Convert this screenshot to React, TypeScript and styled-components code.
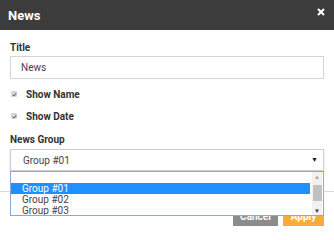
import React from 'react';
import styled, { createGlobalStyle } from 'styled-components';

const GlobalStyle = createGlobalStyle`
  html, body { margin: 0; padding: 0; background: #fff; }
  body { font-family: Roboto, "Liberation Sans", Arial, sans-serif; }
`;

const Dialog = styled.div`
  width: 334px;
  height: 235px;
  background: #fff;
  overflow: hidden;
  position: relative;
`;

const Header = styled.div`
  height: 30px;
  background: #3c3c3c;
  display: flex;
  align-items: center;
  justify-content: space-between;
  padding: 0 9px 0 8px;
  box-sizing: border-box;
`;

const HeaderTitle = styled.span`
  color: #fff;
  font-size: 13px;
  font-weight: 700;
  margin-top: 1px;
`;

const CloseButton = styled.span`
  display: flex;
  margin-top: -6px;
`;

const Body = styled.div`
  padding: 12px 10px 0 10px;
`;

const Label = styled.div<{ $mt?: number }>`
  font-size: 10px;
  line-height: 12px;
  font-weight: 700;
  color: #333;
  margin-top: ${p => p.$mt ?? 0}px;
`;

const TextInput = styled.div`
  margin-top: 2px;
  height: 23px;
  box-sizing: border-box;
  border: 1px solid #d4d4d4;
  display: flex;
  align-items: center;
  padding-left: 10px;
  font-size: 10px;
  color: #4d3a52;
`;

const CheckRow = styled.div<{ $mt: number }>`
  display: flex;
  align-items: center;
  height: 12px;
  margin-top: ${p => p.$mt}px;
`;

const CheckBox = styled.span`
  width: 6px;
  height: 6px;
  margin-left: 1px;
  border-radius: 1px;
  background: #d6d6d6;
  display: flex;
  align-items: center;
  justify-content: center;
`;

const CheckLabel = styled.span`
  margin-left: 9px;
  font-size: 10px;
  font-weight: 700;
  color: #333;
`;

const SelectWrap = styled.div`
  position: relative;
  margin-top: 3px;
`;

const SelectBox = styled.div`
  height: 22px;
  box-sizing: border-box;
  border: 1px solid #cfcfcf;
  box-shadow: 0 1px 2px rgba(0, 0, 0, 0.15);
  display: flex;
  align-items: center;
  justify-content: space-between;
  padding: 0 5px 0 12px;
  font-size: 10px;
  color: #444;
`;

const Caret = styled.span`
  font-size: 7px;
  color: #222;
`;

const ListBox = styled.div`
  position: absolute;
  left: 0;
  top: 22px;
  width: 314px;
  height: 45px;
  box-sizing: border-box;
  border: 1px solid #8aa8d8;
  background: #fff;
  display: flex;
  z-index: 2;
  overflow: hidden;
`;

const Options = styled.div`
  flex: 1;
`;

const Option = styled.div<{ $selected?: boolean }>`
  height: 11px;
  line-height: 11px;
  padding-left: 11px;
  font-size: 10px;
  color: ${p => (p.$selected ? '#fff' : '#444')};
  background: ${p => (p.$selected ? '#1e90ff' : 'transparent')};
  margin-right: 2px;
`;

const Scrollbar = styled.div`
  width: 10px;
  display: flex;
  flex-direction: column;
  align-items: center;
  background: #f1f1f1;
  margin-right: 1px;
`;

const ScrollArrow = styled.span<{ $dark?: boolean }>`
  height: 9px;
  display: flex;
  align-items: center;
  justify-content: center;
  font-size: 6px;
  color: ${p => (p.$dark ? '#333' : '#a3a3a3')};
`;

const Thumb = styled.div`
  width: 9px;
  height: 16px;
  margin-top: 4px;
  background: #c1c1c1;
  flex: none;
`;

const Spacer = styled.div`
  flex: 1;
`;

const Footer = styled.div`
  margin-top: 20px;
  border-top: 1px solid #d9d9d9;
  display: flex;
  justify-content: flex-end;
  gap: 5px;
  padding: 14px 10px 0 0;
`;

const FooterButton = styled.button<{ $variant: 'cancel' | 'apply' }>`
  height: 20px;
  border: none;
  padding: 0;
  font-family: inherit;
  font-size: 10px;
  font-weight: 700;
  color: #fff;
  width: ${p => (p.$variant === 'cancel' ? 45 : 41)}px;
  background: ${p => (p.$variant === 'cancel' ? '#8c8c8c' : '#f8ab3c')};
`;

const Check = () => (
  <svg width="5" height="5" viewBox="0 0 10 10">
    <path d="M1.5 5.5 L4 8 L8.5 2" stroke="#555" strokeWidth="2" fill="none" />
  </svg>
);

export default function App() {
  return (
    <Dialog>
      <GlobalStyle />
      <Header>
        <HeaderTitle>News</HeaderTitle>
        <CloseButton>
          <svg width="8" height="8" viewBox="0 0 8 8">
            <path d="M1 1 L7 7 M7 1 L1 7" stroke="#fff" strokeWidth="2" />
          </svg>
        </CloseButton>
      </Header>
      <Body>
        <Label>Title</Label>
        <TextInput>News</TextInput>
        <CheckRow $mt={9}>
          <CheckBox><Check /></CheckBox>
          <CheckLabel>Show Name</CheckLabel>
        </CheckRow>
        <CheckRow $mt={10}>
          <CheckBox><Check /></CheckBox>
          <CheckLabel>Show Date</CheckLabel>
        </CheckRow>
        <Label $mt={12}>News Group</Label>
        <SelectWrap>
          <SelectBox>
            <span>Group #01</span>
            <Caret>▼</Caret>
          </SelectBox>
          <ListBox>
            <Options>
              <Option />
              <Option $selected>Group #01</Option>
              <Option>Group #02</Option>
              <Option>Group #03</Option>
            </Options>
            <Scrollbar>
              <ScrollArrow>▲</ScrollArrow>
              <Thumb />
              <Spacer />
              <ScrollArrow $dark>▼</ScrollArrow>
            </Scrollbar>
          </ListBox>
        </SelectWrap>
      </Body>
      <Footer>
        <FooterButton $variant="cancel">Cancel</FooterButton>
        <FooterButton $variant="apply">Apply</FooterButton>
      </Footer>
    </Dialog>
  );
}
